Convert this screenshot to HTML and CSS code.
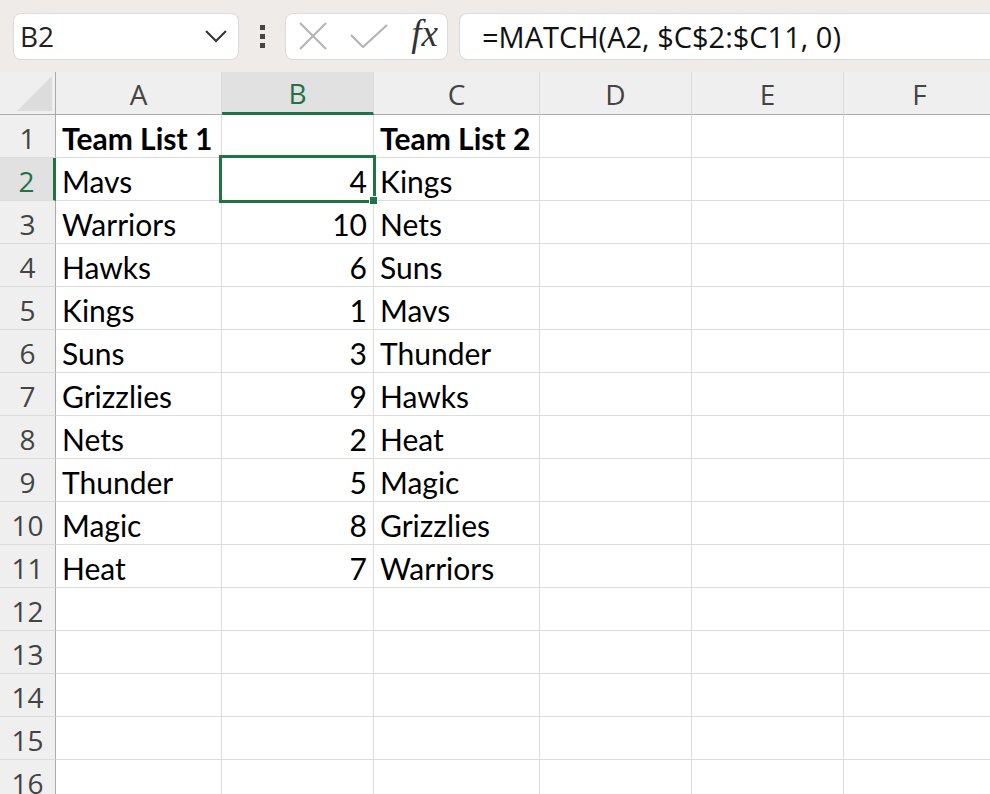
FILE: index.html
```html
<!DOCTYPE html>
<html lang="en">
<head>
  <meta charset="UTF-8" />
  <title>MATCH example</title>
  <link rel="stylesheet" href="styles.css">
</head>
<body>
  <div class="toolbar">
    <div class="name-box">
      <span>B2</span>
      <svg class="chevron" width="24" height="14" viewBox="0 0 24 14"><path d="M2 2 L12 12 L22 2" fill="none" stroke="#333" stroke-width="2"/></svg>
    </div>
    <div class="grip"><i></i><i></i><i></i></div>
    <div class="fx-box">
      <svg width="28" height="28" viewBox="0 0 28 28"><path d="M1 1 L27 27 M27 1 L1 27" stroke="#b5b5b5" stroke-width="2.2" fill="none"/></svg>
      <svg width="38" height="24" viewBox="0 0 38 24"><path d="M1 11 L13 23 L37 1" stroke="#b5b5b5" stroke-width="2.2" fill="none"/></svg>
      <span class="fx">fx</span>
    </div>
    <div class="formula">=MATCH(A2, $C$2:$C11, 0)</div>
  </div>

  <div class="sheet">
    <div class="corner"><span class="tri"></span></div>
    <div class="col-head">A</div>
    <div class="col-head active">B</div>
    <div class="col-head">C</div>
    <div class="col-head">D</div>
    <div class="col-head">E</div>
    <div class="col-head">F</div>
  </div>
  <div id="rows" class="sheet"></div>

  <script>
    const data = [
      ["Team List 1", "", "Team List 2"],
      ["Mavs", 4, "Kings"],
      ["Warriors", 10, "Nets"],
      ["Hawks", 6, "Suns"],
      ["Kings", 1, "Mavs"],
      ["Suns", 3, "Thunder"],
      ["Grizzlies", 9, "Hawks"],
      ["Nets", 2, "Heat"],
      ["Thunder", 5, "Magic"],
      ["Magic", 8, "Grizzlies"],
      ["Heat", 7, "Warriors"]
    ];
    const rows = document.getElementById("rows");
    for (let r = 1; r <= 16; r++) {
      const d = data[r - 1] || ["", "", ""];
      const bold = r === 1 ? " bold" : "";
      rows.innerHTML += `<div class="row-head${r === 2 ? " active" : ""}">${r}</div>`
        + `<div class="cell${bold}">${d[0]}</div>`
        + `<div class="cell num${r === 2 ? " selected" : ""}">${d[1]}</div>`
        + `<div class="cell${bold}">${d[2]}</div>`
        + `<div class="cell"></div><div class="cell"></div><div class="cell"></div>`;
    }
  </script>
</body>
</html>
```

FILE: styles.css
```css
:root {
  --green: #217346;
  --grid: #dcdcdc;
  --head-bg: #efefef;
  --head-line: #ababab;
}
body {
  margin: 0;
  width: 990px;
  height: 794px;
  overflow: hidden;
  background: #fff;
  font-family: "Open Sans", "Noto Sans", sans-serif;
}
.toolbar {
  display: flex;
  align-items: center;
  height: 72px;
  padding-left: 13px;
  background: #efebe8;
  box-sizing: border-box;
}
.name-box, .fx-box, .formula {
  height: 47px;
  background: #fff;
  border: 1px solid #dedad7;
  border-radius: 8px;
  box-sizing: border-box;
  display: flex;
  align-items: center;
}
.name-box {
  width: 226px;
  padding: 0 10px 0 6px;
  justify-content: space-between;
  font-size: 28px;
  color: #222;
}
.grip {
  width: 46px;
  display: flex;
  flex-direction: column;
  align-items: center;
  gap: 4px;
}
.grip i {
  width: 5px;
  height: 5px;
  background: #444;
}
.fx-box {
  width: 163px;
  padding: 0 9px 0 13px;
  justify-content: space-between;
}
.fx {
  font-family: "Liberation Serif", "DejaVu Serif", serif;
  font-style: italic;
  font-size: 37px;
  color: #333;
  margin-top: -6px;
}
.formula {
  margin-left: 11px;
  flex: 1;
  border-right: none;
  border-radius: 8px 0 0 8px;
  padding-left: 22px;
  font-size: 29px;
  color: #111;
}
.sheet {
  display: grid;
  grid-template-columns: 56px 166px 152px 166px 152px 152px 152px;
}
.corner, .col-head {
  height: 43px;
  box-sizing: border-box;
  background: var(--head-bg);
  border-bottom: 1px solid var(--head-line);
  border-right: 1px solid var(--grid);
}
.corner {
  position: relative;
  border-right-color: var(--head-line);
}
.tri {
  position: absolute;
  right: 3px;
  bottom: 3px;
  width: 0;
  height: 0;
  border-left: 35px solid transparent;
  border-bottom: 35px solid #dcdcdc;
}
.col-head {
  text-align: center;
  font-size: 28px;
  line-height: 44px;
  color: #444;
}
.col-head.active {
  background: #e1e1e1;
  color: var(--green);
  border-bottom: 3px solid var(--green);
  line-height: 42px;
}
.row-head {
  height: 43px;
  box-sizing: border-box;
  background: var(--head-bg);
  border-bottom: 1px solid var(--grid);
  border-right: 1px solid var(--head-line);
  text-align: center;
  font-size: 28px;
  line-height: 46px;
  color: #444;
}
.row-head.active {
  background: #e1e1e1;
  color: var(--green);
  border-right: 3px solid var(--green);
}
.cell {
  height: 43px;
  box-sizing: border-box;
  border-bottom: 1px solid var(--grid);
  border-right: 1px solid var(--grid);
  padding: 0 6px;
  font-family: "Lato", "Liberation Sans", sans-serif;
  font-size: 30px;
  line-height: 46px;
  color: #000;
  white-space: nowrap;
}
.cell.bold { font-weight: bold; }
.cell.num { text-align: right; }
.cell.selected { position: relative; }
.cell.selected::before {
  content: "";
  position: absolute;
  left: -3px;
  top: -3px;
  right: -3px;
  bottom: -3px;
  border: 3px solid var(--green);
}
.cell.selected::after {
  content: "";
  position: absolute;
  right: -5px;
  bottom: -5px;
  width: 7px;
  height: 7px;
  background: var(--green);
  border: 1px solid #fff;
}
```
